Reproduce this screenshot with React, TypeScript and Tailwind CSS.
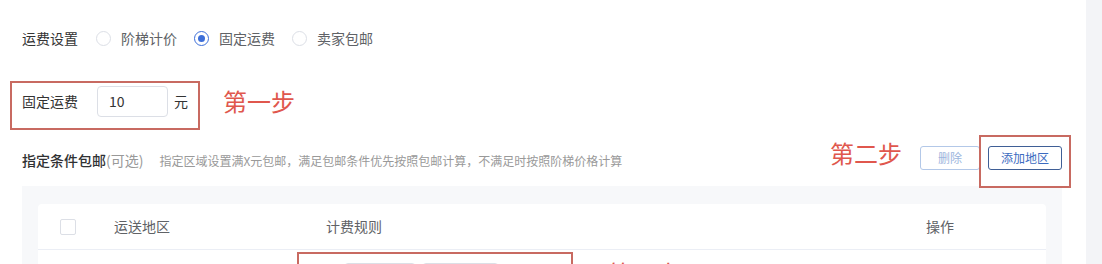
import React from "react";

const FONT = { fontFamily: "'Noto Sans CJK SC', 'Noto Sans', sans-serif" };

function Radio({ checked, label }: { checked?: boolean; label: string }) {
  return (
    <div className="flex items-center">
      <span
        className={
          checked
            ? "w-[15px] h-[15px] rounded-full border border-[#3d6fd9] bg-white flex items-center justify-center"
            : "w-[15px] h-[15px] rounded-full border border-[#dcdfe6] bg-white"
        }
      >
        {checked && <span className="w-[7px] h-[7px] rounded-full bg-[#3d6fd9]" />}
      </span>
      <span className="ml-[10px] text-[14px] leading-[20px] text-[#606266]">{label}</span>
    </div>
  );
}

export default function App() {
  return (
    <div className="w-[1102px] h-[264px] overflow-hidden flex bg-white" style={FONT}>
      <div className="w-[1086px] pl-[22px] pr-[24px] flex flex-col">
        {/* 运费设置 */}
        <div className="mt-[28px] flex items-center h-[20px]">
          <span className="text-[14px] leading-[20px] text-[#333]">运费设置</span>
          <div className="ml-[18px] flex items-center gap-[17px]">
            <Radio label="阶梯计价" />
            <Radio label="固定运费" checked />
            <Radio label="卖家包邮" />
          </div>
        </div>

        {/* 固定运费 */}
        <div className="mt-[33px] flex items-start">
          <div className="-ml-[12px] w-[190px] h-[49px] border-2 border-[#c86a61] pl-[10px] pt-[3px] flex items-start">
            <span className="mt-[5px] text-[14px] leading-[20px] text-[#333]">固定运费</span>
            <div className="ml-[19px] w-[71px] h-[31px] border border-[#dcdfe6] rounded-[4px] flex items-center pl-[11px] text-[14px] text-[#333]">
              10
            </div>
            <span className="ml-[6px] mt-[5px] text-[14px] leading-[20px] text-[#333]">元</span>
          </div>
          <span className="ml-[23px] mt-[4px] text-[24px] leading-[32px] text-[#e0574d]">第一步</span>
        </div>

        {/* 指定条件包邮 */}
        <div className="mt-[7px] flex items-start">
          <div className="mt-[13px] flex items-baseline">
            <span className="text-[14px] leading-[20px] font-medium text-[#303133]">指定条件包邮</span>
            <span className="text-[14px] leading-[20px] text-[#999]">(可选)</span>
            <span className="ml-[16px] text-[12px] leading-[20px] text-[#999]">
              指定区域设置满X元包邮，满足包邮条件优先按照包邮计算，不满足时按照阶梯价格计算
            </span>
          </div>
          <div className="ml-auto flex items-start">
            <span className="text-[24px] leading-[32px] text-[#e0574d]">第二步</span>
            <div className="ml-[18px] mt-[9px] w-[60px] h-[24px] border border-[#b3c8e8] rounded-[3px] flex items-center justify-center text-[12px] text-[#9cb5dd]">
              删除
            </div>
            <div className="relative ml-[8px] mt-[9px] w-[74px] h-[24px] border border-[#3f5f96] rounded-[3px] flex items-center justify-center text-[12px] text-[#3c6bbf]">
              添加地区
              <div className="absolute -left-[10px] -top-[12px] -right-[10px] -bottom-[19px] border-2 border-[#c86a61]" />
            </div>
          </div>
        </div>

        {/* 表格区域 */}
        <div className="mt-[15px] bg-[#f7f8fa] px-[16px] pt-[18px] flex-1">
          <div className="bg-white rounded-[4px] h-[120px]">
            <div className="h-[46px] border-b border-[#ebeef5] flex items-center pl-[22px] text-[14px] text-[#606266]">
              <span className="w-[16px] h-[16px] border border-[#dcdfe6] rounded-[2px] bg-white" />
              <span className="ml-[38px] w-[212px]">运送地区</span>
              <span className="w-[600px]">计费规则</span>
              <span>操作</span>
            </div>
            <div className="relative flex items-start">
              <div className="absolute left-[259px] top-[2px] w-[276px] h-[60px] border-2 border-[#c86a61]" />
              <div className="ml-[306px] mt-[13px] w-[72px] h-[30px] border border-[#dcdfe6] rounded-[4px]" />
              <div className="ml-[6px] mt-[13px] w-[77px] h-[30px] border border-[#dcdfe6] rounded-[4px]" />
              <span className="ml-[109px] mt-[7px] text-[24px] leading-[32px] text-[#e0574d]">第三步</span>
            </div>
          </div>
        </div>
      </div>
      <div className="w-[16px] bg-[#f3f4f7]" />
    </div>
  );
}
